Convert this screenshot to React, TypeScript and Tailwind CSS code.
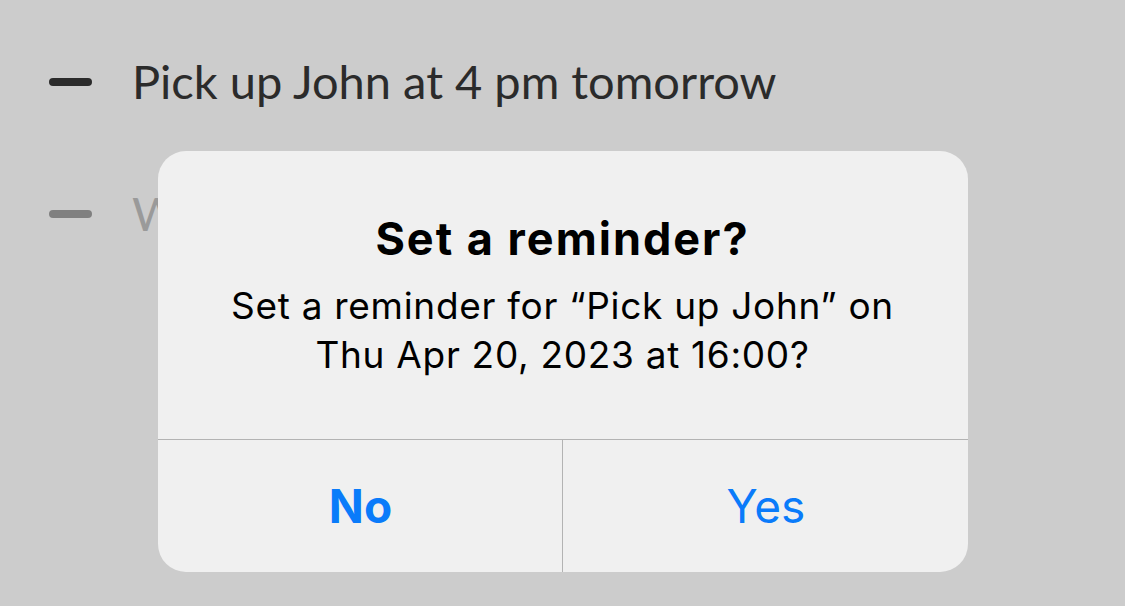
import React from 'react'

const tasks = [
  { id: 1, text: 'Pick up John at 4 pm tomorrow', done: false },
  { id: 2, text: 'Walk the dog before dinner', done: true },
]

function TaskRow({ text, done }: { text: string; done: boolean }): React.ReactElement {
  return (
    <div className="flex h-[55px] items-center gap-[40px]">
      <div className={`h-2 w-[43px] shrink-0 rounded-full ${done ? 'bg-[#808080]' : 'bg-[#2b2b2b]'}`} />
      <span
        className={`whitespace-nowrap text-[47px] leading-[1.15] ${done ? 'text-[#9a9a9a]' : 'text-[#2b2b2b]'}`}
        style={{ fontFamily: 'Lato, sans-serif' }}
      >
        {text}
      </span>
    </div>
  )
}

/**
 * Alert asking the user whether to create a reminder for the task.
 */
function ReminderAlert(): React.ReactElement {
  return (
    <div className="absolute inset-0 flex justify-center pt-[151px]">
      <div
        className="flex h-[421px] w-[810px] flex-col overflow-hidden rounded-[28px] bg-[#f0f0f0] text-black"
        style={{ fontFamily: 'Inter, "Liberation Sans", sans-serif' }}
      >
        {/* Message */}
        <div className="flex h-[288px] flex-col items-center pt-[62px] text-center">
          <h2 className="text-[45px] font-bold leading-[1.15] tracking-[2px]">Set a reminder?</h2>
          <p className="mt-[16px] text-[37px] leading-[49px] tracking-[0.7px]">
            Set a reminder for “Pick up John” on
            <br />
            Thu Apr 20, 2023 at 16:00?
          </p>
        </div>

        {/* Actions */}
        <div className="grid flex-1 grid-cols-2 border-t border-[#b3b3b3]">
          <button
            type="button"
            className="flex items-center justify-center border-r border-[#b3b3b3] pl-[2px] text-[46px] font-bold text-[#0a7bfa]"
          >
            No
          </button>
          <button type="button" className="flex items-center justify-center pl-[2px] text-[46px] text-[#0a7bfa]">
            Yes
          </button>
        </div>
      </div>
    </div>
  )
}

export default function App(): React.ReactElement {
  return (
    <div className="relative h-[606px] w-[1125px] overflow-hidden bg-[#cccccc]">
      <div className="flex flex-col gap-[77px] pl-[49px] pt-[54px]">
        {tasks.map((task) => (
          <TaskRow key={task.id} text={task.text} done={task.done} />
        ))}
      </div>
      <ReminderAlert />
    </div>
  )
}
